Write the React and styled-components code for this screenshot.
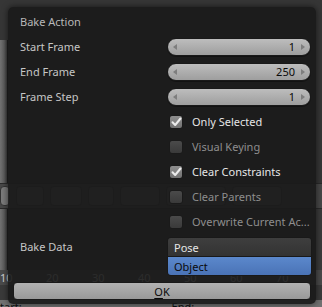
import React from "react"
import styled, { createGlobalStyle } from "styled-components"

const GlobalStyle = createGlobalStyle`
    html, body {
        margin: 0;
        padding: 0;
        background: #2d2d2d;
        overflow: hidden;
    }
    * { box-sizing: border-box; }
`

const font = `"Noto Sans", "Open Sans", "DejaVu Sans", sans-serif`

const Screen = styled.div`
    position: relative;
    width: 322px;
    height: 307px;
    display: flex;
    flex-direction: column;
    font-family: ${font};
    overflow: hidden;
`

// ---------- blender editor behind the popup ----------

const Viewport = styled.div`
    height: 183px;
    display: flex;
    background: #363636;
`

const ShelfEdge = styled.div`
    width: 8px;
    height: ${p => p.h || '100%'};
    margin-top: ${p => p.top || '0px'};
    background: linear-gradient(90deg, #727272, #5c5c5c 60%, #3e3e3e);
    border-right: 1px solid #202020;
`

const Toolbar = styled.div`
    height: 25px;
    display: flex;
    align-items: center;
    gap: 6px;
    background: #474747;
    border-top: 1px solid #2a2a2a;
`

const ToolGroup = styled.div`
    width: ${p => p.w}px;
    height: 20px;
    border-radius: 4px;
    background: ${p => p.bg || '#5a5a5a'};
    border: 1px solid #333;
`

const TimelineArea = styled.div`
    height: 62px;
    display: flex;
    background: #3a3a3a;
    border-top: 1px solid #2a2a2a;
`

const Ruler = styled.div`
    height: 15px;
    display: flex;
    align-items: center;
    background: #4a4a4a;
    color: #cfcfcf;
    font-size: 11px;
`

const Tick = styled.span`
    width: 46px;
    flex: none;
`

const TimelineRest = styled.div`
    height: 15px;
    background: #3a3a3a;
`

const BottomHeader = styled.div`
    flex: 1;
    display: flex;
    align-items: center;
    gap: 150px;
    background: #727272;
    color: #111;
    font-size: 11px;
    line-height: 7px;
    overflow: hidden;
    span { margin-top: 6px; }
`

// ---------- popup ----------

const Dialog = styled.div`
    position: absolute;
    left: 8px;
    top: 7px;
    width: 308px;
    height: 297px;
    padding: 2px 5px 4px 5px;
    border-radius: 5px;
    background: rgba(25, 25, 25, 0.9);
    box-shadow: 0 0 6px rgba(0, 0, 0, 0.6);
    display: flex;
    flex-direction: column;
    font-size: 11px;
`

const Row = styled.div`
    height: 25px;
    display: grid;
    grid-template-columns: 154px 144px;
    align-items: center;
`

const Label = styled.div`
    padding-left: 7px;
    color: ${p => p.title ? '#b8b8b8' : '#c6c6c6'};
    white-space: nowrap;
`

const Field = styled.div`
    height: 18px;
    border-radius: 9px;
    border: 1px solid #191919;
    background: linear-gradient(#bdbdbd, #9e9e9e);
    display: flex;
    align-items: center;
    padding: 0 5px;
    color: #0a0a0a;
    box-shadow: 0 1px 0 rgba(0,0,0,0.35);
`

const Arrow = styled.span`
    width: 0;
    height: 0;
    border-top: 3px solid transparent;
    border-bottom: 3px solid transparent;
    ${p => p.right
        ? 'border-left: 4px solid #7e7e7e; margin-left: 6px;'
        : 'border-right: 4px solid #7e7e7e;'}
`

const FieldValue = styled.span`
    flex: 1;
    text-align: right;
    line-height: 16px;
`

const CheckRow = styled.div`
    grid-column: 2;
    display: flex;
    align-items: center;
    gap: 9px;
    padding-left: 2px;
    color: ${p => p.dim ? '#8e8e8e' : '#e6e6e6'};
    white-space: nowrap;
`

const Box = styled.span`
    width: 14px;
    height: 14px;
    border-radius: 3px;
    border: 1px solid #1a1a1a;
    background: ${p => p.checked ? 'linear-gradient(#8e8e8e, #737373)' : 'linear-gradient(#4a4a4a, #3a3a3a)'};
    display: flex;
    align-items: center;
    justify-content: center;
    flex: none;
`

const EnumRow = styled.div`
    margin-top: 3px;
    display: grid;
    grid-template-columns: 154px 145px;
    align-items: start;
`

const EnumLabel = styled(Label)`
    height: 19px;
    line-height: 19px;
`

const EnumList = styled.div`
    border: 1px solid #191919;
    border-radius: 4px;
    overflow: hidden;
    display: flex;
    flex-direction: column;
`

const EnumItem = styled.div`
    height: ${p => p.active ? '19px' : '18px'};
    padding-left: 6px;
    display: flex;
    align-items: center;
    background: ${p => p.active ? 'linear-gradient(#5b88cc, #4a73b6)' : 'linear-gradient(#3e3e3e, #333333)'};
    color: ${p => p.active ? '#0a0a0a' : '#e6e6e6'};
    border-top: ${p => p.active ? '1px solid #191919' : 'none'};
`

const OkButton = styled.div`
    margin-top: 6px;
    height: 18px;
    border-radius: 4px;
    border: 1px solid #191919;
    background: linear-gradient(#b2b2b2, #999999);
    display: flex;
    align-items: center;
    justify-content: center;
    color: #0a0a0a;
    u { text-decoration-thickness: 1px; text-underline-offset: 2px; }
`

function NumberField({ value }) {
    return (
        <Field>
            <Arrow />
            <FieldValue>{value}</FieldValue>
            <Arrow right />
        </Field>
    )
}

function Check({ checked, dim, children }) {
    return (
        <CheckRow dim={dim}>
            <Box checked={checked}>
                {checked && (
                    <svg width="11" height="10" viewBox="0 0 11 10">
                        <path d="M1.5 5.2 L4.2 8 L9.5 1.5" fill="none" stroke="#ececec" strokeWidth="2" strokeLinecap="round" strokeLinejoin="round" />
                    </svg>
                )}
            </Box>
            {children}
        </CheckRow>
    )
}

export default function App() {
    return (
        <Screen>
            <GlobalStyle />
            <Viewport>
                <ShelfEdge h="143px" top="40px" />
            </Viewport>
            <Toolbar>
                <ToolGroup w={10} bg="#7a7a7a" />
                <ToolGroup w={28} />
                <ToolGroup w={32} />
                <ToolGroup w={26} />
                <ToolGroup w={40} />
                <ToolGroup w={60} />
                <ToolGroup w={50} />
            </Toolbar>
            <TimelineArea>
                <ShelfEdge />
            </TimelineArea>
            <Ruler>
                <Tick>10</Tick><Tick>20</Tick><Tick>30</Tick><Tick>40</Tick>
                <Tick>50</Tick><Tick>60</Tick><Tick>70</Tick>
            </Ruler>
            <TimelineRest />
            <BottomHeader>
                <span>tart:</span>
                <span>End:</span>
            </BottomHeader>

            <Dialog>
                <Row><Label title="1">Bake Action</Label></Row>
                <Row><Label>Start Frame</Label><NumberField value="1" /></Row>
                <Row><Label>End Frame</Label><NumberField value="250" /></Row>
                <Row><Label>Frame Step</Label><NumberField value="1" /></Row>
                <Row><Check checked>Only Selected</Check></Row>
                <Row><Check dim>Visual Keying</Check></Row>
                <Row><Check checked>Clear Constraints</Check></Row>
                <Row><Check dim>Clear Parents</Check></Row>
                <Row><Check dim>Overwrite Current Ac...</Check></Row>
                <EnumRow>
                    <EnumLabel>Bake Data</EnumLabel>
                    <EnumList>
                        <EnumItem>Pose</EnumItem>
                        <EnumItem active>Object</EnumItem>
                    </EnumList>
                </EnumRow>
                <OkButton><span><u>O</u>K</span></OkButton>
            </Dialog>
        </Screen>
    )
}
